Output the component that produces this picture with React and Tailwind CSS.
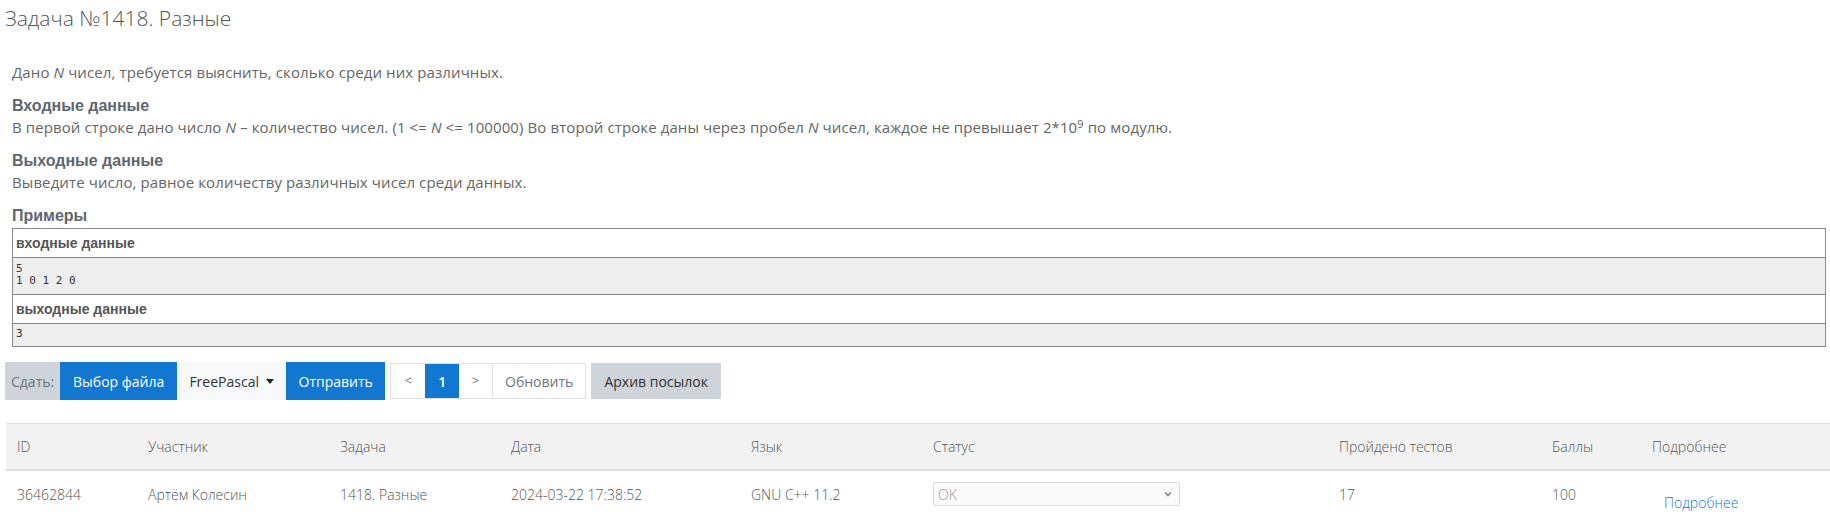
import React from "react";

const ui = "font-['Open_Sans',sans-serif]";
const head = "font-['Liberation_Sans',Arial,sans-serif]";

const columns = [
  { title: "ID", w: "w-[131px]" },
  { title: "Участник", w: "w-[192px]" },
  { title: "Задача", w: "w-[171px]" },
  { title: "Дата", w: "w-[240px]" },
  { title: "Язык", w: "w-[182px]" },
  { title: "Статус", w: "w-[406px]" },
  { title: "Пройдено тестов", w: "w-[213px]" },
  { title: "Баллы", w: "w-[100px]" },
  { title: "Подробнее", w: "w-[189px]" },
];

function Section({ title, children }) {
  return (
    <div className="mt-[14px]">
      <div className={`${head} font-bold text-[16px] leading-[20px] tracking-normal text-[#5f6670]`}>{title}</div>
      <div className="mt-[1px] leading-[20px]">{children}</div>
    </div>
  );
}

function Examples() {
  const label = `${head} font-bold text-[14px] tracking-normal text-[#555] px-[3px]`;
  const data = "font-['DejaVu_Sans_Mono',monospace] text-[11px] leading-[12px] tracking-normal text-[#333] px-[3px] bg-[#eeeeee]";
  return (
    <div className="border border-[#888] mt-[2px]">
      <div className={`${label} h-[29px] flex items-center border-b border-[#888]`}>входные данные</div>
      <div className={`${data} h-[37px] pt-[5px] border-b border-[#888]`}>
        <div>5</div>
        <div>1 0 1 2 0</div>
      </div>
      <div className={`${label} h-[29px] flex items-center border-b border-[#888]`}>выходные данные</div>
      <div className={`${data} h-[22px] pt-[4px]`}>3</div>
    </div>
  );
}

function Toolbar() {
  return (
    <div className={`${ui} flex items-center text-[14px] mt-[15px] ml-[5px]`}>
      <div className="h-[38px] px-[6px] flex items-center bg-[#ced4da] text-[#6c757d]">Сдать:</div>
      <div className="h-[38px] w-[117px] flex items-center justify-center bg-[#1177d1] text-white">Выбор файла</div>
      <div className="h-[38px] w-[109px] flex items-center justify-center gap-[7px] bg-[#f8f9fa] text-[#333]">
        FreePascal
        <span className="w-0 h-0 border-l-[4px] border-r-[4px] border-t-[5px] border-l-transparent border-r-transparent border-t-[#222]" />
      </div>
      <div className="h-[38px] w-[99px] flex items-center justify-center bg-[#1177d1] text-white">Отправить</div>
      <div className="ml-[5px] h-[36px] flex border border-[#dee2e6]">
        <div className="w-[34px] flex items-center justify-center text-[#777] text-[13px]">&lt;</div>
        <div className="w-[34px] flex items-center justify-center bg-[#1177d1] text-white font-semibold">1</div>
        <div className="w-[34px] flex items-center justify-center text-[#777] text-[13px] border-r border-[#dee2e6]">&gt;</div>
        <div className="w-[92px] flex items-center justify-center text-[#6c757d]">Обновить</div>
      </div>
      <div className="ml-[5px] h-[36px] w-[130px] flex items-center justify-center bg-[#ced4da] text-[#333]">Архив посылок</div>
    </div>
  );
}

function Submissions() {
  const cell = "px-[11px] text-left font-light";
  return (
    <table className={`${ui} mt-[23px] ml-[6px] border-collapse text-[14px] text-[#555]`}>
      <thead>
        <tr className="bg-[#f2f2f2] border-t border-[#dee2e6] border-b-2">
          {columns.map((c) => (
            <th key={c.title} className={`${cell} ${c.w} h-[46px] font-light`}>
              {c.title}
            </th>
          ))}
        </tr>
      </thead>
      <tbody>
        <tr className="h-[48px]">
          <td className={cell}>36462844</td>
          <td className={cell}>Артём Колесин</td>
          <td className={cell}>1418. Разные</td>
          <td className={cell}>2024-03-22 17:38:52</td>
          <td className={cell}>GNU C++ 11.2</td>
          <td className={cell}>
            <div className="w-[247px] h-[24px] border border-[#dcdcdc] rounded-[2px] bg-[#fafafa] flex items-center justify-between px-[4px] text-[#999]">
              <span>OK</span>
              <svg width="10" height="10" viewBox="0 0 10 10" className="mr-[2px]">
                <path d="M2 3.5 L5 6.5 L8 3.5" fill="none" stroke="#777" strokeWidth="1.3" />
              </svg>
            </div>
          </td>
          <td className={cell}>17</td>
          <td className={cell}>100</td>
          <td className={cell}>
            <span className="inline-block mt-[16px] ml-[12px] text-[#1a73d9]">Подробнее</span>
          </td>
        </tr>
      </tbody>
    </table>
  );
}

export default function App() {
  return (
    <div className="w-[1830px] h-[529px] bg-white overflow-hidden">
      <h1 className={`${ui} font-light text-[21px] leading-[32px] text-[#555] pl-[5px] pt-[2px]`}>
        Задача №1418. Разные
      </h1>
      <div className={`${ui} text-[15px] tracking-[0.1px] text-[#666] pl-[12px] pr-[4px] mt-[28px]`}>
        <div className="leading-[20px]">
          Дано <i>N</i> чисел, требуется выяснить, сколько среди них различных.
        </div>
        <Section title="Входные данные">
          В первой строке дано число <i>N</i> – количество чисел. (1 &lt;= <i>N</i> &lt;= 100000) Во второй строке даны через пробел <i>N</i> чисел, каждое не превышает 2*10<sup className="text-[11px]">9</sup> по модулю.
        </Section>
        <Section title="Выходные данные">
          Выведите число, равное количеству различных чисел среди данных.
        </Section>
        <div className={`${head} font-bold text-[16px] leading-[20px] tracking-normal text-[#5f6670] mt-[14px]`}>Примеры</div>
        <Examples />
      </div>
      <Toolbar />
      <Submissions />
    </div>
  );
}
